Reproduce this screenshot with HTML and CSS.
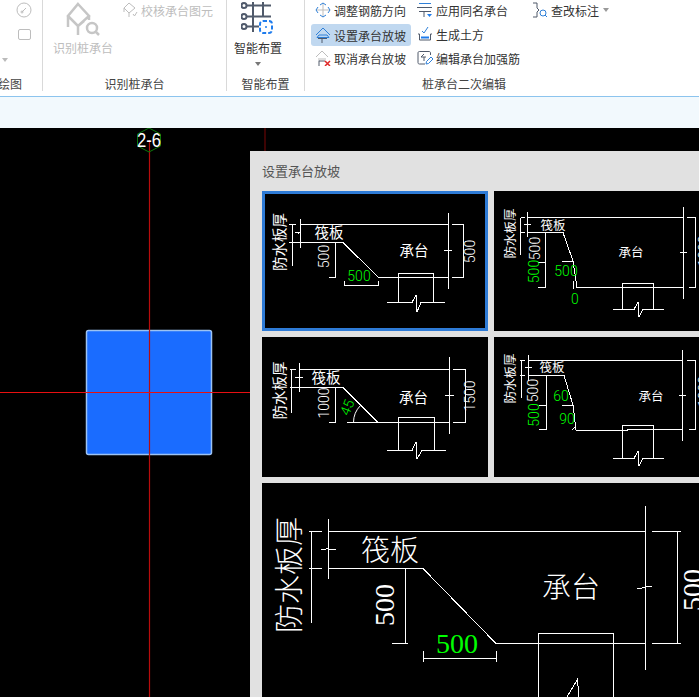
FILE: index.html
```html
<!DOCTYPE html>
<html lang="zh-CN">

<head>
  <meta charset="UTF-8" />
  <title>设置承台放坡</title>
  <link rel="stylesheet" href="styles.css">
</head>

<body>
  <!-- Ribbon -->
  <div class="ribbon">
    <div class="group group-draw">
      <div class="group-body draw-tools">
        <svg class="icon" viewBox="0 0 16 16"><circle cx="8" cy="8" r="7" class="i-gray" /><path d="M6 10L10 6" class="i-gray" /><circle cx="6" cy="10" r="1" class="i-gray" /></svg>
        <svg class="icon" viewBox="0 0 16 16"><rect x="2.500" y="2.500" width="12" height="10" rx="1.500" class="i-gray" /></svg>
        <span class="caret caret-light"></span>
      </div>
      <div class="group-label">绘图</div>
    </div>

    <div class="group group-identify">
      <div class="group-body identify-tools">
        <button class="big-btn disabled">
          <svg class="big-icon" viewBox="0 0 34 34">
            <path d="M12 2L23 14L12 24L2 14Z M2 14V25M12 24V33M23 14V18M2 14L12 24L18 19" class="i-pile" />
            <circle cx="26" cy="26" r="5" class="i-pile" />
            <path d="M30 30L33 33" class="i-pile" />
          </svg>
          <span>识别桩承台</span>
        </button>
        <div class="tool disabled check-tool">
          <svg class="icon" viewBox="0 0 16 16">
            <path d="M7 1L13 6L7 11L2 6Z M2 6V10M7 11V15M11 12L12.500 14L15 10" class="i-gray" />
          </svg>
          <span>校核承台图元</span>
        </div>
      </div>
      <div class="group-label">识别桩承台</div>
    </div>

    <div class="group group-smart">
      <div class="group-body smart-tools">
        <button class="big-btn">
          <svg class="big-icon" viewBox="0 0 34 34">
            <path d="M4 3.500H30M4 14.500H30M4 24.500H18M12 0V30M22 0V14.500" class="i-slate" />
            <circle cx="3" cy="3.500" r="2.500" class="i-dot" />
            <circle cx="3" cy="14.500" r="2.500" class="i-dot" />
            <circle cx="3" cy="24.500" r="2.500" class="i-dot" />
            <rect x="19" y="19" width="12" height="12" rx="3" class="i-dash" />
            <circle cx="25" cy="25" r="1" fill="#1f7ced" />
          </svg>
          <span>智能布置</span>
          <span class="caret"></span>
        </button>
      </div>
      <div class="group-label">智能布置</div>
    </div>

    <div class="group group-edit">
      <div class="group-body edit-tools">
        <div class="tool-col col-one">
          <div class="tool">
            <svg class="icon" viewBox="0 0 16 16">
              <path d="M8 1V15M1 8H15" class="i-gray" />
              <path d="M5 3L8 1L11 3M5 13L8 15L11 13M3 5L1 8L3 11M13 5L15 8L13 11" class="i-blue" />
            </svg>
            <span>调整钢筋方向</span>
          </div>
          <div class="tool active">
            <svg class="icon" viewBox="0 0 16 16">
              <path d="M1 8L8 1L15 8" class="i-blue" />
              <path d="M4 8H12L14 10.500H2Z" class="i-blue" />
              <path d="M3 11.500H12M7 11.500V16" class="i-dark" />
            </svg>
            <span>设置承台放坡</span>
          </div>
          <div class="tool">
            <svg class="icon" viewBox="0 0 16 16">
              <path d="M1 7L7 1L13 7M3 9H11" class="i-gray" />
              <path d="M4 10.500V16M4 11H10" class="i-dark" />
              <path d="M10 11L15 16M15 11L10 16" class="i-red" />
            </svg>
            <span>取消承台放坡</span>
          </div>
        </div>
        <div class="tool-col col-two">
          <div class="tool">
            <svg class="icon" viewBox="0 0 16 16">
              <path d="M2 1.500H14" class="i-blue" />
              <path d="M0 5.500H15M2 9.500H14M7 9.500V15" class="i-dark" />
              <path d="M10 12H15L12.500 15Z" fill="#1f7ced" />
            </svg>
            <span>应用同名承台</span>
          </div>
          <div class="tool">
            <svg class="icon" viewBox="0 0 16 16">
              <path d="M5 5L7 7L11 1" class="i-blue" />
              <path d="M1 8H2.500V14H13.500V8H15" class="i-dark" />
              <path d="M4 10.500H12V12.500H4Z" fill="#1f7ced" />
            </svg>
            <span>生成土方</span>
          </div>
          <div class="tool">
            <svg class="icon" viewBox="0 0 16 16">
              <path d="M8 14H2.500C1.500 14 1 13.500 1 12.500V3C1 2 1.500 1.500 2.500 1.500H12C13 1.500 13.500 2 13.500 3V5" class="i-dark" />
              <path d="M7 4L4 7H9M7 7V11" class="i-dark" />
              <path d="M9 14L9.500 11.500L14 7L16 9L11.500 13.500Z" class="i-blue" />
            </svg>
            <span>编辑承台加强筋</span>
          </div>
        </div>
        <div class="tool-col col-three">
          <div class="tool">
            <svg class="icon" viewBox="0 0 16 16">
              <path d="M1 1H5V6L7 8L5 10V15H1" class="i-dark" />
              <circle cx="11" cy="11" r="3" class="i-blue" />
              <path d="M13 13L15 15" class="i-blue" />
            </svg>
            <span>查改标注</span>
            <span class="caret caret-inline"></span>
          </div>
        </div>
      </div>
      <div class="group-label">桩承台二次编辑</div>
    </div>
  </div>

  <div class="status-band"></div>

  <!-- Drawing area -->
  <div class="canvas">
    <svg class="canvas-draw" viewBox="0 0 699 569">
      <rect x="86.500" y="202.500" width="125" height="124" rx="2" fill="#1a6cff" stroke="#9cc2f2" stroke-width="1.500" />
      <path d="M149.500 12V569" stroke="#b80c0c" stroke-width="1.200" />
      <path d="M0 264.500H250" stroke="#e81010" />
      <path d="M265 0V23" stroke="#7a0606" />
      <path d="M149 0L160.500 6V18L149 24L137.500 18V6Z" fill="none" stroke="#0a7a0a" />
      <text x="149" y="19" class="axis-text" textLength="24" lengthAdjust="spacingAndGlyphs">2-6</text>
    </svg>

    <div class="dialog">
      <div class="dialog-title">设置承台放坡</div>
      <div class="thumbs">
        <div class="thumb selected">
          <svg class="cad" width="226" height="140" viewBox="0 0 226 140">
            <path class="cad-line" d="M38 33.500H186M38 28V57M33 41H38L36 43M38 51.500H81L116 86H186M186.500 22V98M182 59H190M190 33.500H201.500M201.500 33.500V86M190 86H201.500M73.500 51.500V86M67 86H73.500M82 90V94H116V90M30 33.500V75M27 33.500H34M27 51.500H38M136.500 86V82H171.500V111M136.500 86V111M125 111.500H150L154 104L155 121L159 111.500H183" />
            <text class="cad-text cad-num" transform="translate(208 60.500) rotate(-90)">500</text>
            <text class="cad-text cad-num" transform="translate(62 65.500) rotate(-90)">500</text>
            <text class="cad-green cad-num" x="97" y="85">500</text>
            <text class="cad-text cad-cn" transform="translate(16.500 51) rotate(-90)">防水板厚</text>
            <text class="cad-text cad-cn" x="67" y="40">筏板</text>
            <text class="cad-text cad-cn" x="152" y="58">承台</text>
          </svg>
        </div>

        <div class="thumb">
          <svg class="cad" width="226" height="140" viewBox="0 0 226 140">
            <path class="cad-line" d="M33 26.500H189M33.500 21V46M30 33H37M33 41.500H69L79 70L83 96.500H189M189.500 16V108M186 61H193M193 26.500H201.500M201.500 26.500V96M195 96.500H201.500M51.500 41.500V96.500M44 71.500H52M44 96.500H52M68 70.500H79M79 90V98M26.500 26.500V64M26.500 26.500H31M26.500 41.500H31M128.500 96V92.500H159.500V118M128.500 96V118M119 118.500H140L144 111L145 126L149 118.500H170" />
            <text class="cad-text cad-num" transform="translate(40.500 57.500) rotate(-90)">500</text>
            <text class="cad-green cad-num" transform="translate(40 80.500) rotate(-90)">500</text>
            <text class="cad-green cad-num" x="72" y="80">500</text>
            <text class="cad-green cad-num" x="81" y="108">0</text>
            <text class="cad-text cad-num" transform="translate(210 60) rotate(-90)">1000</text>
            <text class="cad-text cad-cn-sm" transform="translate(15.500 42.500) rotate(-90)">防水板厚</text>
            <text class="cad-text cad-cn-sm" x="59" y="33">筏板</text>
            <text class="cad-text cad-cn-sm" x="137" y="60.500">承台</text>
          </svg>
        </div>

        <div class="thumb">
          <svg class="cad" width="226" height="140" viewBox="0 0 226 140">
            <path class="cad-line" d="M37 32.500H188M37.500 26V55M33 40.500H41M37 50.500H81L116 85.500M85 85.500H188M187.500 20V97M183 58H192M191 32.500H203.500M203.500 32.500V85.500M191 85.500H203.500M73.500 50.500V85.500M67 85.500H73.500M29.500 32.500V75.500M28 32.500H34M28 50.500H37M136.500 85V80.500H172.500V113M136.500 85V113M125 113.500H150L154 105L155 122L160 113.500H184" />
            <path class="cad-arc" d="M91.500 85.500A24 24 0 0 1 98.500 68.500" />
            <text class="cad-text cad-num" transform="translate(208 59) rotate(-90)">1500</text>
            <text class="cad-text cad-num" transform="translate(62 66) rotate(-90)">1000</text>
            <text class="cad-green cad-num" transform="translate(85 70.500) rotate(-68)">45</text>
            <text class="cad-text cad-cn" transform="translate(16.500 53.500) rotate(-90)">防水板厚</text>
            <text class="cad-text cad-cn" x="64" y="39.500">筏板</text>
            <text class="cad-text cad-cn" x="151.500" y="59.500">承台</text>
          </svg>
        </div>

        <div class="thumb">
          <svg class="cad" width="226" height="140" viewBox="0 0 226 140">
            <path class="cad-line" d="M34 23.500H188M34.500 18V44M31 30.500H38M34 38.500H70L79 68L82 93M82 93.500H133V92.500H188M188.500 13V104M185 58.500H192M193 23.500H201.500M201.500 23.500V92.500M195 92.500H201.500M52.500 38.500V92.500M45 68.500H52M45 92.500H52M68 68.500H79M78 93L82 89M27.500 23.500V60.500M26 23.500H31M26 38.500H31M128.500 92V88.500H159.500V121M128.500 92V121M119 121.500H140L144 114L145 129L149 121.500H170" />
            <text class="cad-text cad-num" transform="translate(39 53.500) rotate(-90)">500</text>
            <text class="cad-green cad-num" transform="translate(39.500 78) rotate(-90)">500</text>
            <text class="cad-green cad-num" x="67" y="58.500">60</text>
            <text class="cad-green cad-num" x="73" y="82">90</text>
            <text class="cad-text cad-num" transform="translate(210 54.500) rotate(-90)">1000</text>
            <text class="cad-text cad-cn-sm" transform="translate(15.500 41.500) rotate(-90)">防水板厚</text>
            <text class="cad-text cad-cn-sm" x="58" y="29.500">筏板</text>
            <text class="cad-text cad-cn-sm" x="157" y="58">承台</text>
          </svg>
        </div>
      </div>

      <div class="preview">
        <svg class="cad" width="460" height="300" viewBox="0 0 460 300">
          <path class="cad-line" d="M66 48.500H383M66.500 36V96M59 67L66 65.500L68 67L74 66M47 48.500H60M47 85.500H60M66 85.500H161L234 160.500H383M383.500 23V187M375 105H380L386 103H390M390 48.500H419M415.500 48.500V160.500M390 160.500H419M143.500 85.500V160.500M130 160.500H146M49.500 48.500V140M161 175.500H234M161 168V179M234 168V179M276.500 160V150.500H351.500V300M276.500 160V300M305 214L315.500 196.500L319 240" />
          <text class="cad-text cad-serif" transform="translate(430.500 107) rotate(-90)">500</text>
          <text class="cad-text cad-serif" transform="translate(122.500 122) rotate(-90)">500</text>
          <text class="cad-green cad-serif" x="195" y="160">500</text>
          <text class="cad-text cad-cn-lg" transform="translate(24.500 92) rotate(-90)">防水板厚</text>
          <text class="cad-text cad-cn-lg" x="128" y="65">筏板</text>
          <text class="cad-text cad-cn-lg" x="309" y="102">承台</text>
        </svg>
      </div>
    </div>
  </div>
</body>

</html>
```

FILE: styles.css
```css
* {
  margin: 0;
  padding: 0;
  box-sizing: border-box;
}

html,
body {
  height: 100%;
  overflow: hidden;
}

body {
  display: flex;
  flex-direction: column;
  background: #000;
  font-family: "Noto Sans CJK SC", "Noto Sans", sans-serif;
  font-size: 12px;
  color: #333;
}

/* Ribbon */
.ribbon {
  display: flex;
  height: 97px;
  padding-bottom: 5px;
  background: #fff;
  border-bottom: 1px solid #8cc4ee;
}

.group {
  display: flex;
  flex-direction: column;
  flex-shrink: 0;
  border-right: 1px solid #d9d9d9;
}

.group-body {
  height: 76px;
  flex-shrink: 0;
  overflow: hidden;
}

.group-label {
  line-height: 16px;
  text-align: center;
  color: #444;
}

.group-draw {
  width: 43px;
}

.group-draw .group-label {
  padding-right: 20px;
  white-space: nowrap;
  direction: rtl;
}

.group-identify {
  width: 184px;
}

.group-smart {
  width: 78px;
}

.group-edit {
  flex: 1;
  min-width: 0;
  border-right: none;
  padding-right: 76px;
}

.draw-tools {
  display: flex;
  flex-direction: column;
  align-items: flex-start;
  gap: 9px;
  padding: 2px 0 0 16px;
}

.draw-tools .caret {
  margin: 6px 0 0 -14px;
}

.identify-tools {
  display: flex;
  padding-left: 10px;
}

.smart-tools {
  padding-left: 7px;
}

.big-btn {
  display: flex;
  flex-direction: column;
  align-items: center;
  flex-shrink: 0;
  background: none;
  border: none;
  font: inherit;
  color: #333;
  padding-top: 2px;
  line-height: 16px;
}

.big-icon {
  width: 34px;
  height: 34px;
  margin-bottom: 4px;
}

.big-btn.disabled,
.tool.disabled {
  color: #bdbdbd;
}

.check-tool {
  margin-left: 5px;
  margin-top: -2px;
}

.edit-tools {
  display: flex;
  padding-left: 6px;
  margin-top: -2px;
  margin-bottom: 2px;
}

.tool-col {
  display: flex;
  flex-direction: column;
  flex-shrink: 0;
}

.col-one {
  width: 100px;
  margin-right: 6px;
}

.col-two {
  width: 111px;
}

.col-three {
  padding-left: 4px;
}

.tool {
  display: flex;
  align-items: center;
  height: 24px;
  padding-left: 4px;
  white-space: nowrap;
}

.tool .icon {
  margin-right: 3px;
}

.col-two .tool,
.col-three .tool {
  padding-left: 0;
}

.tool.active {
  height: 22px;
  margin-top: 2px;
  background: #c0d8f0;
  border-radius: 3px;
}

.icon {
  width: 16px;
  height: 16px;
  flex-shrink: 0;
}

.caret {
  display: block;
  width: 0;
  height: 0;
  margin-top: 6px;
  border-left: 3.5px solid transparent;
  border-right: 3.5px solid transparent;
  border-top: 4px solid #777;
}

.caret-light {
  border-top-color: #bbb;
}

.caret-inline {
  margin: 0 0 0 4px;
  border-top-color: #999;
}

/* Icon strokes */
.i-gray,
.i-pile,
.i-slate,
.i-blue,
.i-dark,
.i-red,
.i-dash {
  fill: none;
}

.i-gray {
  stroke: #bdbdbd;
}

.i-pile {
  stroke: #c6c6c6;
  stroke-width: 2.500;
}

.i-slate {
  stroke: #505a6b;
  stroke-width: 2;
}

.i-dot {
  stroke: #505a6b;
  stroke-width: 2;
  fill: #fff;
}

.i-dash {
  stroke: #1f7ced;
  stroke-width: 2;
  stroke-dasharray: 4 2;
}

.i-blue {
  stroke: #2f80d8;
}

.i-dark {
  stroke: #505a6b;
}

.i-red {
  stroke: #e02828;
  stroke-width: 1.500;
}

.status-band {
  height: 31px;
  background: #f2f9fd;
  flex-shrink: 0;
}

/* Drawing area */
.canvas {
  position: relative;
  flex: 1;
  background: #000;
  overflow: hidden;
}

.canvas-draw {
  position: absolute;
  top: 0;
  left: 0;
  width: 699px;
  height: 569px;
}

.axis-text {
  font-family: "Liberation Sans", sans-serif;
  font-size: 20px;
  fill: #fff;
  text-anchor: middle;
}

.dialog {
  position: absolute;
  top: 23px;
  left: 250px;
  width: 480px;
  height: 560px;
  padding: 0 12px;
  background: #e1e1e1;
}

.dialog-title {
  height: 40px;
  line-height: 40px;
  font-size: 13px;
  color: #555;
}

.thumbs {
  display: grid;
  grid-template-columns: 226px 226px;
  grid-auto-rows: 140px;
  gap: 6px;
}

.thumb {
  background: #000;
  overflow: hidden;
}

.thumb.selected {
  outline: 3px solid #2e7bd6;
  outline-offset: -3px;
}

.preview {
  width: 460px;
  height: 300px;
  margin-top: 6px;
  background: #000;
  overflow: hidden;
}

.cad {
  display: block;
}

.cad-line {
  fill: none;
  stroke: #fff;
  shape-rendering: crispEdges;
}

.cad-arc {
  fill: none;
  stroke: #fff;
}

.cad-text,
.cad-green {
  text-anchor: middle;
  dominant-baseline: central;
}

.cad-text {
  fill: #fff;
}

.cad-green {
  fill: #00ff00;
}

.cad-num {
  font-family: Roboto, "Liberation Sans", sans-serif;
  font-size: 14px;
  font-weight: 300;
}

.cad-serif {
  font-family: "Liberation Serif", serif;
  font-size: 28px;
}

.cad-cn {
  font-size: 14.500px;
}

.cad-cn-sm {
  font-size: 12.500px;
}

.cad-cn-lg {
  font-size: 29px;
  font-weight: 300;
}
```
